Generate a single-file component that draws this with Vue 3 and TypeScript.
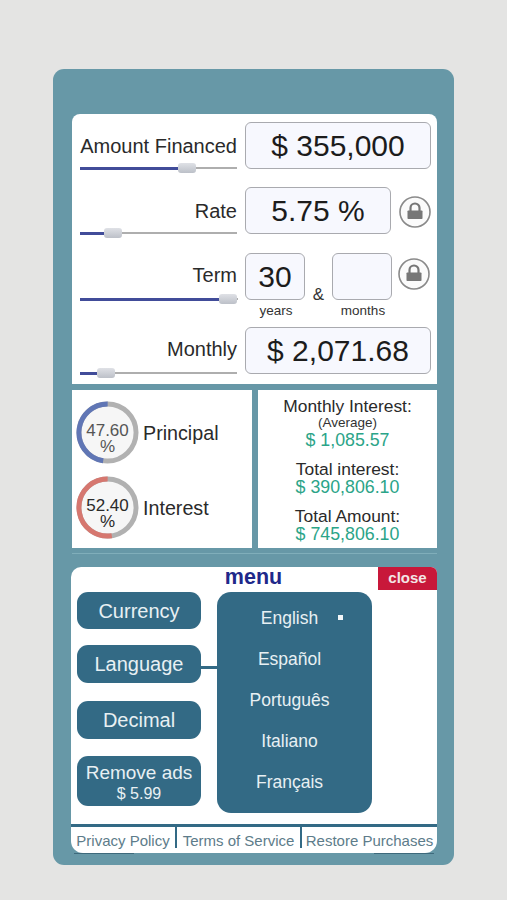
<script setup lang="ts">
interface CalcRow { label: string; value: string; fill: number; narrow: boolean; lock: boolean }
const rows: CalcRow[] = [
  { label: 'Amount Financed', value: '$ 355,000', fill: 107, narrow: false, lock: false },
  { label: 'Rate', value: '5.75 %', fill: 33, narrow: true, lock: true },
  { label: 'Term', value: '', fill: 148, narrow: false, lock: true },
  { label: 'Monthly', value: '$ 2,071.68', fill: 26, narrow: false, lock: false },
]
const rings = [
  { value: '47.60', label: 'Principal', pct: 47.6, color: '#6076b5', muted: true },
  { value: '52.40', label: 'Interest', pct: 52.4, color: '#d6776f', muted: false },
]
const stats = [
  { title: 'Monthly Interest:', sub: '(Average)', value: '$ 1,085.57' },
  { title: 'Total interest:', sub: '', value: '$ 390,806.10' },
  { title: 'Total Amount:', sub: '', value: '$ 745,806.10' },
]
const circ = 2 * Math.PI * 29
const langs = ['English', 'Español', 'Português', 'Italiano', 'Français']
</script>

<template>
  <div class="page">
    <div class="panel">
      <section class="calc">
        <div v-for="(r, i) in rows" :key="r.label" class="row" :class="'row' + i">
          <div class="left">
            <div class="label">{{ r.label }}</div>
            <div class="slider">
              <div class="fill" :style="{ width: r.fill + 'px' }"></div>
              <div class="thumb" :style="{ left: r.fill - 9 + 'px' }"></div>
            </div>
          </div>
          <div v-if="r.label === 'Term'" class="term">
            <div class="term-col">
              <div class="box small">30</div>
              <div class="unit">years</div>
            </div>
            <span class="amp">&amp;</span>
            <div class="term-col">
              <div class="box small months"></div>
              <div class="unit">months</div>
            </div>
          </div>
          <div v-else class="box" :class="{ narrow: r.narrow }">{{ r.value }}</div>
          <svg v-if="r.lock" class="lock" viewBox="0 0 32 32" width="32" height="32">
            <circle cx="16" cy="16" r="15" fill="#fbfbfb" stroke="#8a8a8a" stroke-width="1.6" />
            <path d="M11.5 15v-3a4.5 4.5 0 0 1 9 0v3" fill="none" stroke="#777" stroke-width="2.2" />
            <rect x="8.5" y="14.5" width="15" height="8.5" rx="0.8" fill="#777" />
          </svg>
        </div>
      </section>

      <section class="stats">
        <div class="rings">
          <div v-for="g in rings" :key="g.label" class="ring-row">
            <div class="ring">
              <svg viewBox="0 0 64 64" width="63" height="63">
                <circle cx="32" cy="32" r="29" fill="#f6f6f6" stroke="#b1b1b1" stroke-width="5" />
                <circle
                  cx="32" cy="32" r="29" fill="none" :stroke="g.color" stroke-width="5"
                  :stroke-dasharray="(g.pct / 100) * circ + ' ' + circ"
                  :transform="'rotate(' + (-90 - (g.pct / 100) * 360) + ' 32 32)'"
                />
              </svg>
              <div class="ring-text" :class="{ muted: g.muted }">{{ g.value }}<br />%</div>
            </div>
            <span class="ring-label">{{ g.label }}</span>
          </div>
        </div>
        <div class="totals">
          <div v-for="s in stats" :key="s.title" class="total">
            <div class="t-title">{{ s.title }}</div>
            <div v-if="s.sub" class="t-sub">{{ s.sub }}</div>
            <div class="t-value">{{ s.value }}</div>
          </div>
        </div>
      </section>

      <div class="rule"></div>

      <section class="menu">
        <header class="menu-head">
          <span class="menu-title">menu</span>
          <span class="close">close</span>
        </header>
        <div class="menu-body">
          <div class="buttons">
            <div class="btn b0">Currency</div>
            <div class="btn b1">Language<i class="link"></i></div>
            <div class="btn b2">Decimal</div>
            <div class="btn b3">Remove ads<small>$ 5.99</small></div>
          </div>
          <ul class="langs">
            <li v-for="(l, i) in langs" :key="l">{{ l }}<i v-if="i === 0" class="dot"></i></li>
          </ul>
        </div>
        <footer class="foot">
          <span class="f0">Privacy Policy</span>
          <span class="f1">Terms of Service</span>
          <span class="f2">Restore Purchases</span>
        </footer>
      </section>
      <div class="edge"><i></i><i></i></div>
    </div>
  </div>
</template>

<style>
html, body { margin: 0; background: #e4e4e3; }
</style>

<style scoped>
.page {
  width: 507px;
  height: 900px;
  padding: 69px 0 0 53px;
  box-sizing: border-box;
  font-family: "Liberation Sans", Arial, sans-serif;
  color: #222;
  overflow: hidden;
}
.panel {
  width: 401px;
  height: 796px;
  box-sizing: border-box;
  padding: 45px 17px 0 18px;
  background: #6798a7;
  border-radius: 11px;
  display: flex;
  flex-direction: column;
}
.calc {
  width: 365px;
  margin-left: 1px;
  height: 270px;
  box-sizing: border-box;
  padding: 8px 6px 0 8px;
  background: #fff;
  border-radius: 8px 8px 0 0;
}
.row { display: flex; align-items: flex-start; gap: 8px; }
.row1 { margin-top: 18px; }
.row2 { margin-top: 19px; height: 74px; }
.left { width: 157px; height: 47px; position: relative; flex: none; }
.label {
  text-align: right;
  font-size: 20px;
  line-height: 24px;
  padding-top: 12px;
  color: #2a2a2a;
}
.row2 .label { padding-top: 10px; }
.row3 .label { padding-top: 10px; }
.slider {
  position: absolute;
  left: 0;
  right: 0;
  bottom: 0;
  height: 2px;
  background: #aeaeae;
}
.row2 .slider { right: -1px; }
.fill { height: 2.5px; background: #414c99; }
.thumb {
  position: absolute;
  top: -4px;
  width: 18px;
  height: 10px;
  border-radius: 3px;
  background: linear-gradient(#dfe1e6, #bcc0c8);
}
.box {
  width: 186px;
  height: 47px;
  box-sizing: border-box;
  border: 1.5px solid #a9aaaf;
  border-radius: 6px;
  background: #f7f8fe;
  text-align: center;
  font-size: 30px;
  line-height: 45px;
  color: #1c1c1c;
}
.box.narrow { width: 146px; }
.box.small { width: 60px; }
.lock { flex: none; margin: 9px 0 0 0; }
.row2 .lock { margin: 5px 0 0 -2px; }
.term { display: flex; align-items: flex-start; width: 147px; flex: none; }
.term-col { display: flex; flex-direction: column; align-items: center; }
.amp { width: 27px; text-align: center; font-size: 17px; margin-top: 32px; color: #333; }
.unit { font-size: 13.5px; line-height: 16px; margin: 3px 0 0 2px; color: #333; }
.stats { display: flex; gap: 6px; margin: 6px 0 0 1px; height: 158px; width: 365px; }
.rings {
  width: 180px;
  background: #fff;
  box-sizing: border-box;
  padding: 11px 0 0 4px;
  display: flex;
  flex-direction: column;
  gap: 12px;
}
.ring-row { display: flex; align-items: center; gap: 4px; }
.ring { width: 63px; height: 63px; position: relative; flex: none; }
.ring svg { display: block; }
.ring-text {
  position: absolute;
  inset: 0;
  text-align: center;
  font-size: 17px;
  line-height: 16px;
  padding-top: 22px;
  box-sizing: border-box;
  color: #2a2a2a;
}
.ring-text.muted { color: #555; }
.ring-label { font-size: 19.7px; color: #2a2a2a; margin-top: 2px; }
.totals {
  width: 179px;
  background: #fff;
  text-align: center;
  padding-top: 7px;
  box-sizing: border-box;
}
.total { margin-bottom: 10px; }
.t-title { font-size: 17.4px; line-height: 18px; color: #2a2a2a; }
.t-sub { font-size: 13.5px; line-height: 16px; color: #333; }
.t-value { font-size: 17.8px; line-height: 19px; color: #2ba488; }
.rule { height: 1px; margin: 5px 0 1px 1px; width: 365px; background: #80aeba; }
.menu {
  margin-top: 12px;
  width: 366px;
  height: 286px;
  box-sizing: border-box;
  background: #fff;
  border-radius: 10px 6px 12px 12px;
  display: flex;
  flex-direction: column;
  flex: none;
}
.menu-head { position: relative; height: 25px; text-align: center; }
.menu-title {
  font-size: 21.5px;
  font-weight: 700;
  line-height: 21px;
  color: #20288a;
  margin-left: -1px;
}
.close {
  position: absolute;
  top: 0;
  right: 0;
  width: 59px;
  height: 23px;
  background: #c8183a;
  border-top-right-radius: 6px;
  color: #f3e6e6;
  font-size: 15px;
  font-weight: 700;
  line-height: 21px;
  text-align: center;
}
.menu-body { display: flex; gap: 16px; padding-left: 6px; height: 232px; }
.buttons { width: 124px; display: flex; flex-direction: column; }
.btn {
  position: relative;
  height: 38px;
  flex: none;
  border-radius: 11px;
  background: #336a85;
  color: #e8f0f3;
  font-size: 20px;
  line-height: 39px;
  text-align: center;
}
.b0 { height: 37px; }
.b1 { margin-top: 16px; }
.b2 { margin-top: 18px; }
.b3 { margin-top: 17px; height: 50px; padding-top: 6px; box-sizing: border-box; line-height: 22px; font-size: 19px; }
.b3 small { display: block; font-size: 16px; line-height: 20px; }
.link { position: absolute; left: 100%; top: 21px; width: 16px; height: 3px; background: #336a85; }
.langs {
  list-style: none;
  margin: 0;
  padding: 14px 0 0;
  width: 155px;
  height: 221px;
  box-sizing: border-box;
  border-radius: 14px;
  background: #336a85;
  color: #e8f0f3;
  font-size: 17.5px;
  text-align: center;
}
.langs li { height: 41px; line-height: 24px; position: relative; margin-left: -10px; }
.dot {
  position: absolute;
  left: 131px;
  top: 9px;
  width: 5px;
  height: 5px;
  background: #f2f6f8;
}
.foot {
  height: 29px;
  box-sizing: border-box;
  border-top: 3px solid #336a85;
  display: flex;
  font-size: 15px;
  line-height: 27px;
  color: #5d7c8a;
  white-space: nowrap;
}
.foot span { display: block; height: 21px; box-sizing: border-box; text-align: center; }
.f0 { width: 106px; border-right: 2.5px solid #336a85; }
.f1 { width: 125px; border-right: 2.5px solid #336a85; }
.f2 { width: 135px; }
.edge { display: flex; justify-content: space-between; width: 360px; margin-left: 3px; height: 1px; }
.edge i { display: block; width: 60px; background: #3e6a7c; }
</style>
